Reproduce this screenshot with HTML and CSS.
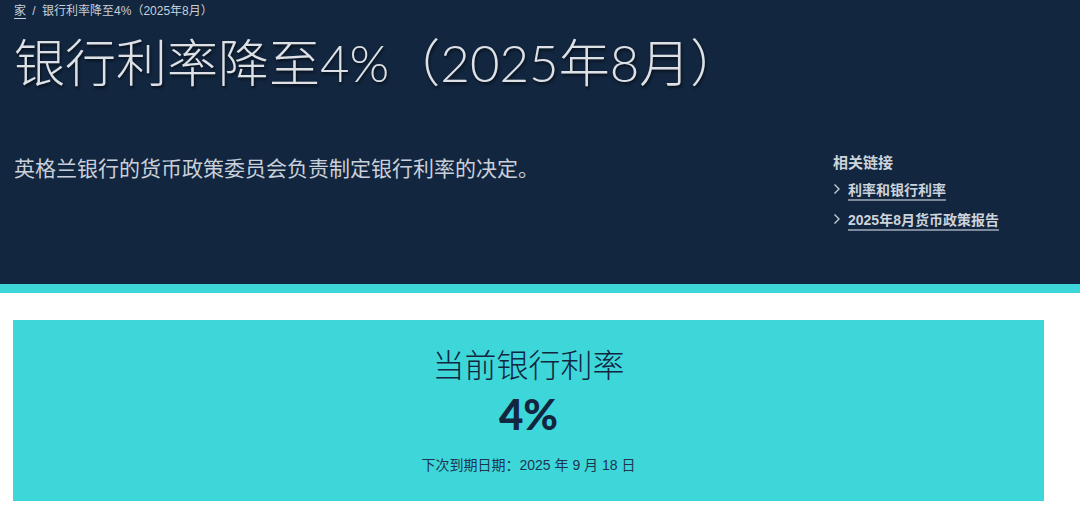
FILE: index.html
```html
<!DOCTYPE html>
<html lang="zh-CN">
<head>
    <meta charset="UTF-8">
    <meta name="viewport" content="width=device-width, initial-scale=1.0">
    <title>银行利率降至4%（2025年8月）</title>
    <link rel="stylesheet" href="styles.css">
</head>
<body>
    <header class="hero">
        <nav class="crumbs">
            <a href="#">家</a>
            <span class="sep">/</span>
            <span>银行利率降至4%（2025年8月）</span>
        </nav>
        <h1>银行利率降至4%（2025年8月）</h1>

        <div class="hero-row">
            <p class="lead">英格兰银行的货币政策委员会负责制定银行利率的决定。</p>
            <aside class="related">
                <h2>相关链接</h2>
                <ul>
                    <li>
                        <svg viewBox="0 0 8 12" width="8" height="12"><path d="M1.5 1.5 6 6l-4.5 4.5" fill="none" stroke="currentColor" stroke-width="1.3"/></svg>
                        <a href="#">利率和银行利率</a>
                    </li>
                    <li>
                        <svg viewBox="0 0 8 12" width="8" height="12"><path d="M1.5 1.5 6 6l-4.5 4.5" fill="none" stroke="currentColor" stroke-width="1.3"/></svg>
                        <a href="#">2025年8月货币政策报告</a>
                    </li>
                </ul>
            </aside>
        </div>
    </header>

    <main class="content">
        <section class="rate-box">
            <h2>当前银行利率</h2>
            <p class="rate">4%</p>
            <p class="next">下次到期日期：2025 年 9 月 18 日</p>
        </section>
    </main>
</body>
</html>
```

FILE: styles.css
```css
body {
    margin: 0;
    font-family: "Liberation Sans", "Noto Sans CJK SC", sans-serif;
    background: #fff;
    color: #12263f;
}

.hero {
    background-color: #12263f;
    color: #d9dee4;
    height: 284px;
    padding: 0 14px;
    border-bottom: 9px solid #3dd7da;
    box-sizing: content-box;
}

.crumbs {
    font-size: 12px;
    line-height: 20px;
    padding-top: 1px;
    color: #c8cfd8;
}

.crumbs a {
    color: #c8cfd8;
    text-decoration: underline;
    text-underline-offset: 3px;
}

.crumbs .sep {
    margin: 0 3px;
}

.hero h1 {
    margin: 7px 0 0 0;
    font-family: Lato, "Noto Sans CJK SC", sans-serif;
    font-weight: 300;
    font-size: 51px;
    line-height: 70px;
    color: #dde1e6;
    text-shadow: 1px 2px 3px rgba(0, 0, 0, 0.6);
}

.hero-row {
    display: flex;
    justify-content: space-between;
    margin-top: 52px;
}

.lead {
    margin: 0;
    padding-top: 2px;
    font-family: "Noto Sans CJK SC", sans-serif;
    font-size: 21px;
    line-height: 30px;
    color: #c9d0d9;
}

.related {
    width: 233px;
    padding-top: 3px;
}

.related h2 {
    margin: 0 0 1px 0;
    font-size: 15px;
    font-weight: bold;
    line-height: 20px;
    color: #cdd3db;
}

.related ul {
    list-style: none;
    margin: 0;
    padding: 0;
}

.related li {
    display: flex;
    align-items: center;
    gap: 7px;
    height: 30px;
    font-size: 14px;
    font-weight: bold;
}

.related svg {
    color: #c9d0d9;
    flex: none;
}

.related a {
    color: #cdd3db;
    text-decoration: underline;
    text-decoration-color: #7d8a9b;
    text-decoration-thickness: 2px;
    text-underline-offset: 4px;
}

.content {
    padding: 27px 36px 40px 13px;
}

.rate-box {
    background-color: #3dd7da;
    height: 181px;
    box-sizing: border-box;
    padding-top: 25px;
    text-align: center;
    color: #12263f;
}

.rate-box h2 {
    margin: 0;
    font-family: Lato, "Noto Sans CJK SC", sans-serif;
    font-weight: 300;
    font-size: 32px;
    line-height: 40px;
}

.rate {
    margin: 4px 0 0 0;
    font-family: Lato, sans-serif;
    font-weight: 900;
    font-size: 42px;
    line-height: 50px;
}

.next {
    margin: 16px 0 0 0;
    font-size: 14px;
    line-height: 20px;
    color: #1e3550;
}
```
